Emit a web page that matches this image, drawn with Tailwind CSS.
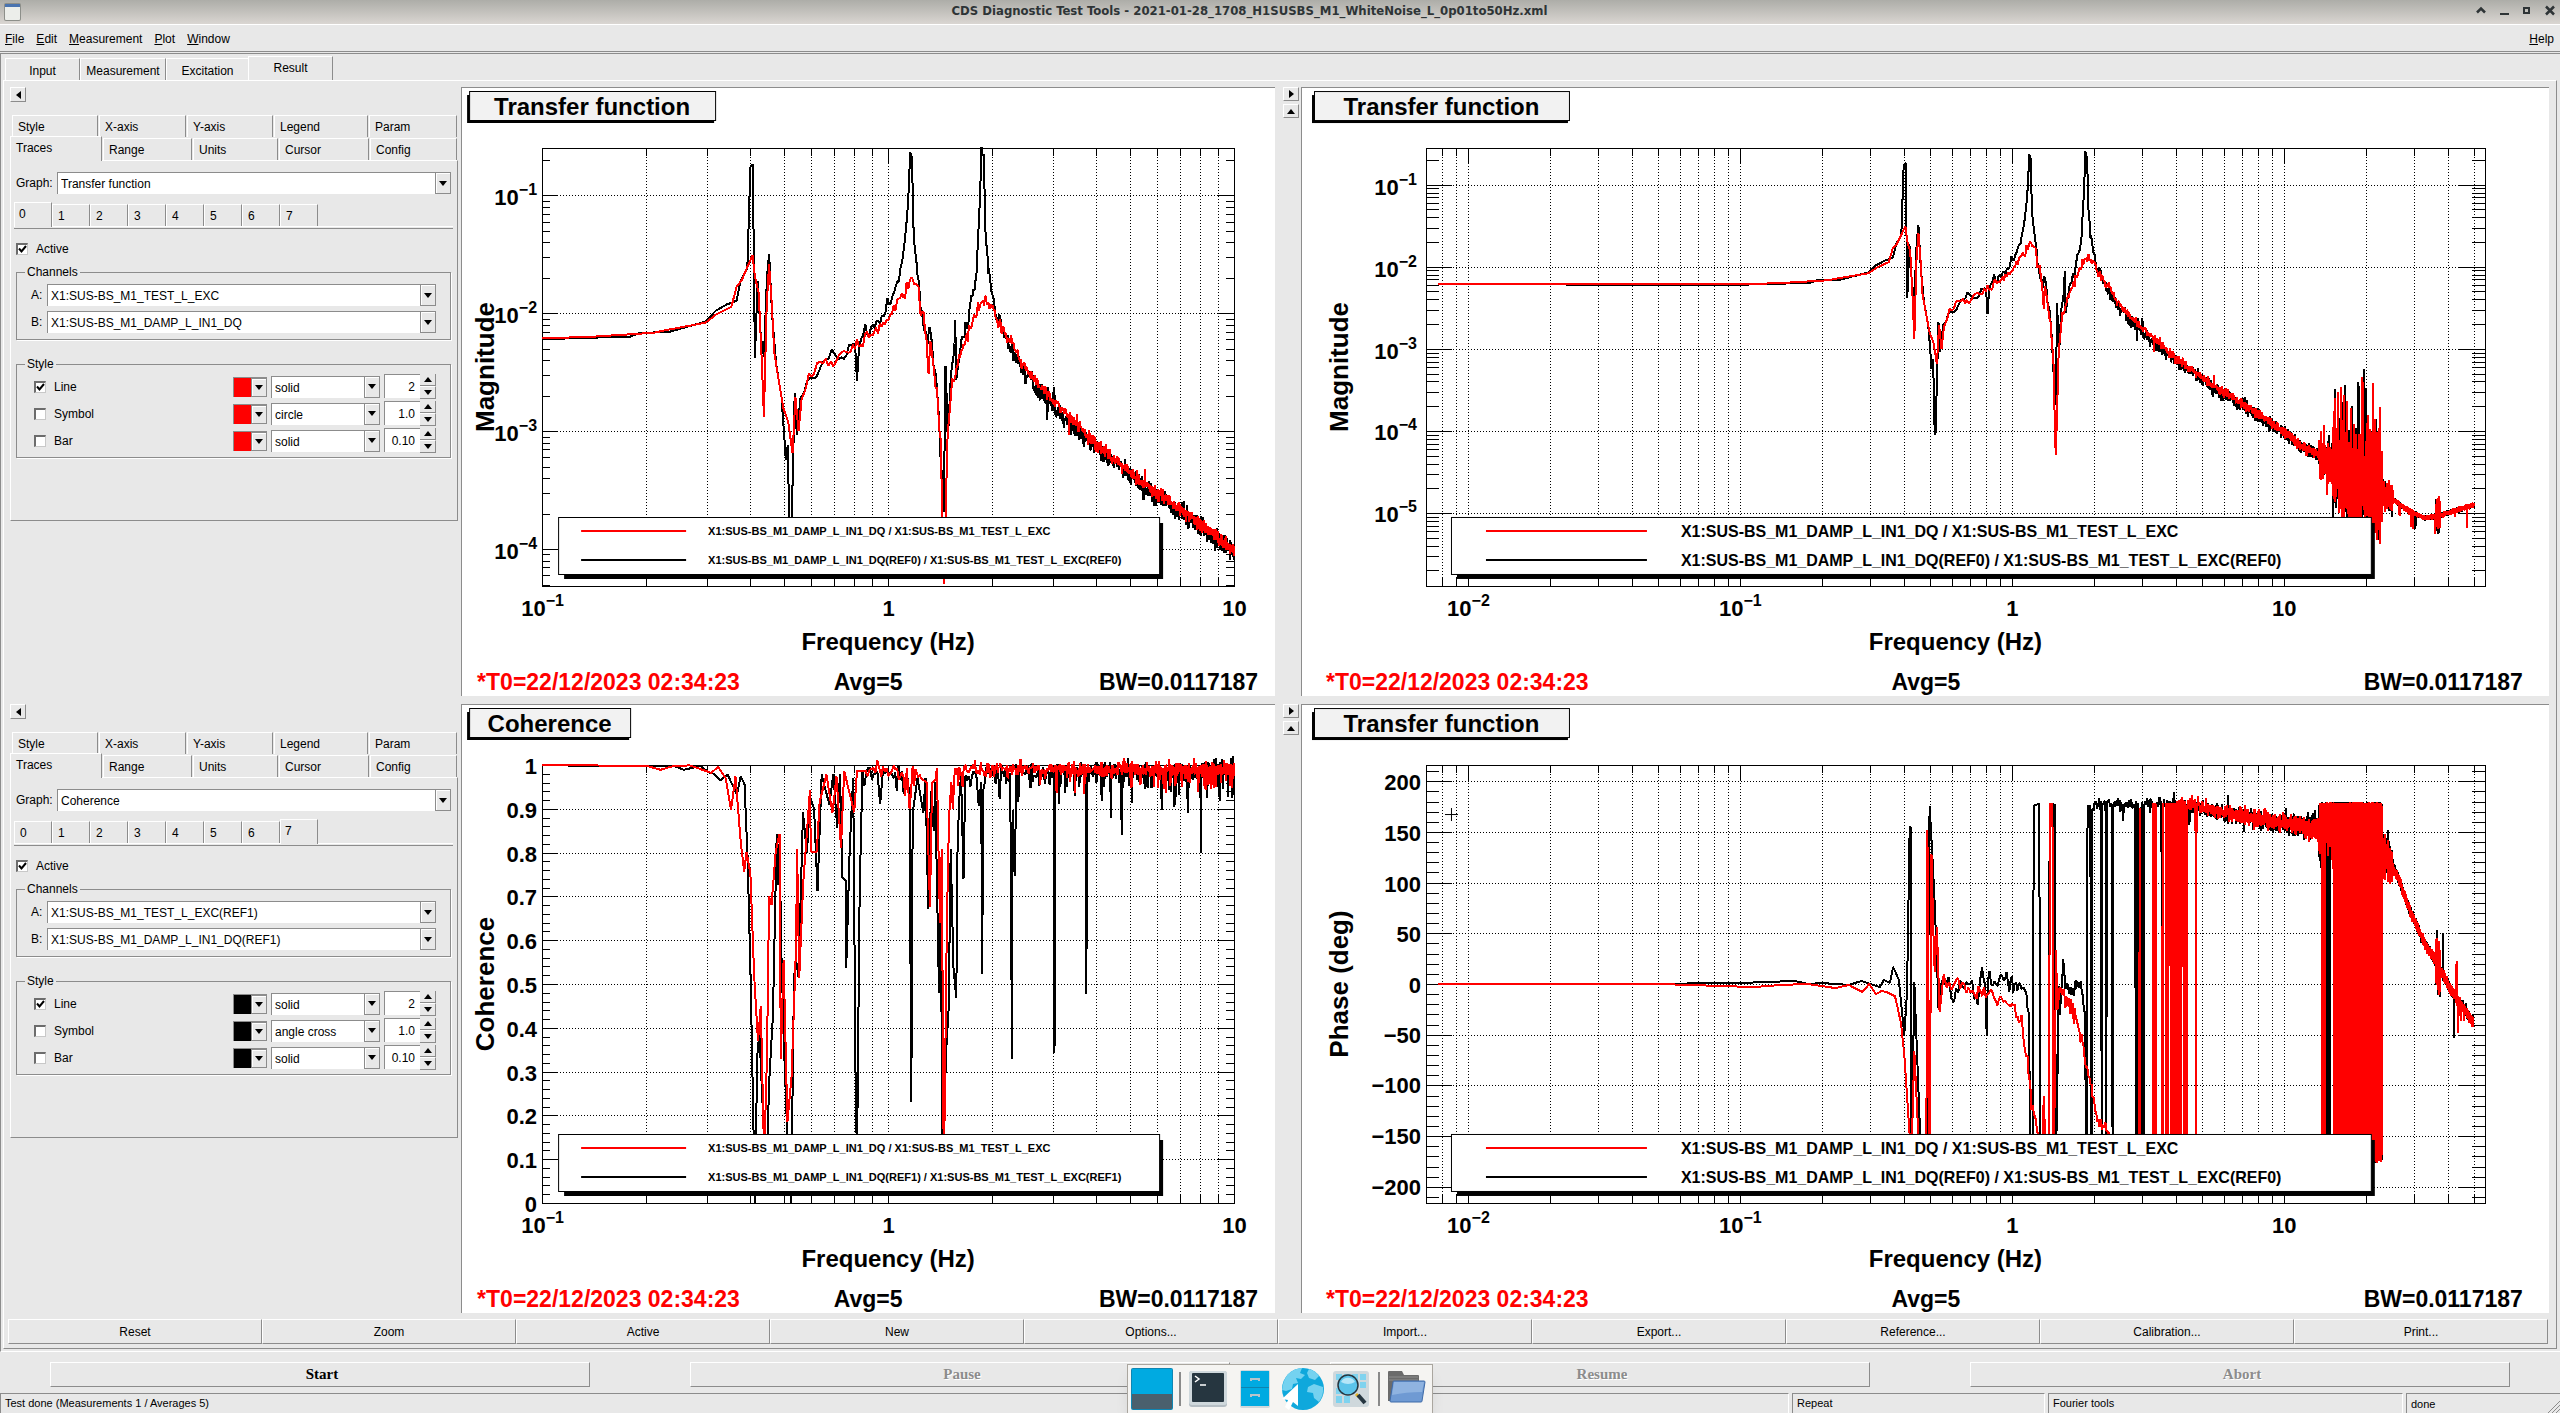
<!DOCTYPE html>
<html lang="en">
<head>
  <meta charset="UTF-8">
  <meta name="viewport" content="width=device-width, initial-scale=1.0">
  <title>CDS Diagnostic Test Tools</title>
  <script src="https://cdn.jsdelivr.net/npm/@tailwindcss/browser@4"></script>
</head>
<body class="h-screen flex flex-col overflow-hidden bg-[#e8e8e8] text-black text-xs font-['Liberation_Sans',Arial,sans-serif]">
  <!-- Title bar -->
  <header class="h-6 shrink-0 flex items-center justify-between px-1 bg-linear-to-b from-[#adada8] to-[#dad6d2] text-[#2e3436]">
    <svg class="w-5 h-5" viewBox="0 0 20 20"><rect x="0" y="1" width="17" height="18" rx="2" fill="#8d8f8a"/><rect x="1" y="2" width="15" height="16" rx="1" fill="#eceeea"/><rect x="1" y="2" width="15" height="3" fill="#4a74b0"/></svg>
    <h1 class="pb-[3px] text-[13px] font-bold font-['DejaVu_Sans_Condensed','DejaVu_Sans',sans-serif]">CDS Diagnostic Test Tools - 2021-01-28_1708_H1SUSBS_M1_WhiteNoise_L_0p01to50Hz.xml</h1>
    <div class="flex gap-[11px] pb-1">
      <button aria-label="Shade"><svg class="w-3 h-3" viewBox="0 0 12 12" fill="none" stroke="#2e3436" stroke-width="2.5"><path d="M2 8.500L6 4.500L10 8.500"/></svg></button>
      <button aria-label="Minimize"><svg class="w-3 h-3" viewBox="0 0 12 12"><rect x="2" y="9" width="9" height="2" fill="#2e3436"/></svg></button>
      <button aria-label="Maximize"><svg class="w-3 h-3" viewBox="0 0 12 12" fill="none" stroke="#2e3436" stroke-width="2"><rect x="3" y="4" width="5" height="5"/></svg></button>
      <button aria-label="Close"><svg class="w-3 h-3" viewBox="0 0 12 12" stroke="#2e3436" stroke-width="2.5"><path d="M2 2.500L10 10.500M10 2.500L2 10.500"/></svg></button>
    </div>
  </header>

  <!-- Menu bar -->
  <nav class="h-7 shrink-0 flex items-center gap-3 pt-[2px] pl-[5px] pr-[6px] border-t border-t-white border-b border-b-[#8c8c8c]">
    <a href="#"><u>F</u>ile</a>
    <a href="#"><u>E</u>dit</a>
    <a href="#"><u>M</u>easurement</a>
    <a href="#"><u>P</u>lot</a>
    <a href="#"><u>W</u>indow</a>
    <a href="#" class="ml-auto"><u>H</u>elp</a>
  </nav>

  <!-- Main area -->
  <main class="flex-1 min-h-0 mt-px flex flex-col pl-[2px] pr-[3px] pb-[2px] border-t border-l border-t-[#8c8c8c] border-l-[#8c8c8c] border-b border-b-white">
    <div class="h-[26px] shrink-0 flex items-end pl-[2px]">
      <button class="w-[75px] h-[22px] pt-[2px] border-t border-l border-white border-r border-r-[#8c8c8c]">Input</button>
      <button class="w-[86px] h-[22px] pt-[2px] border-t border-l border-white border-r border-r-[#8c8c8c]">Measurement</button>
      <button class="w-[82px] h-[22px] pt-[2px] border-t border-l border-white">Excitation</button>
      <button class="w-[85px] h-[25px] -mb-px pb-[2px] bg-[#e8e8e8] border-t border-l border-white border-r border-r-[#8c8c8c]">Result</button>
    </div>
    <div class="flex-1 min-h-0 flex flex-col pt-[6px] pb-1 border-t border-l border-white border-r border-r-[#8c8c8c] border-b border-b-[#8c8c8c]">
      <div id="pads" class="flex-1 min-h-0 grid grid-rows-2 gap-2"></div>
      <div class="h-[25px] shrink-0 mt-[6px] ml-1 mr-2 grid grid-cols-10">
        <button class="border-t border-l border-white border-r border-r-[#8c8c8c] border-b border-b-[#8c8c8c]">Reset</button>
        <button class="border-t border-l border-white border-r border-r-[#8c8c8c] border-b border-b-[#8c8c8c]">Zoom</button>
        <button class="border-t border-l border-white border-r border-r-[#8c8c8c] border-b border-b-[#8c8c8c]">Active</button>
        <button class="border-t border-l border-white border-r border-r-[#8c8c8c] border-b border-b-[#8c8c8c]">New</button>
        <button class="border-t border-l border-white border-r border-r-[#8c8c8c] border-b border-b-[#8c8c8c]">Options...</button>
        <button class="border-t border-l border-white border-r border-r-[#8c8c8c] border-b border-b-[#8c8c8c]">Import...</button>
        <button class="border-t border-l border-white border-r border-r-[#8c8c8c] border-b border-b-[#8c8c8c]">Export...</button>
        <button class="border-t border-l border-white border-r border-r-[#8c8c8c] border-b border-b-[#8c8c8c]">Reference...</button>
        <button class="border-t border-l border-white border-r border-r-[#8c8c8c] border-b border-b-[#8c8c8c]">Calibration...</button>
        <button class="border-t border-l border-white border-r border-r-[#8c8c8c] border-b border-b-[#8c8c8c]">Print...</button>
      </div>
    </div>
  </main>

  <!-- Run controls -->
  <div class="h-[41px] shrink-0 grid grid-cols-4 gap-[100px] px-[50px] pt-[10px] pb-[6px] text-[15px] font-bold font-['Liberation_Serif',serif]">
    <button class="pl-1 border-t border-l border-white border-r border-r-[#8c8c8c] border-b border-b-[#8c8c8c]">Start</button>
    <button disabled class="pl-1 border-t border-l border-white border-r border-r-[#8c8c8c] border-b border-b-[#8c8c8c] text-[#8c8c8c] text-shadow-[1px_1px_0_#fff]">Pause</button>
    <button disabled class="pl-1 border-t border-l border-white border-r border-r-[#8c8c8c] border-b border-b-[#8c8c8c] text-[#8c8c8c] text-shadow-[1px_1px_0_#fff]">Resume</button>
    <button disabled class="pl-1 border-t border-l border-white border-r border-r-[#8c8c8c] border-b border-b-[#8c8c8c] text-[#8c8c8c] text-shadow-[1px_1px_0_#fff]">Abort</button>
  </div>

  <!-- Status bar -->
  <footer class="h-5 shrink-0 grid grid-cols-[1789fr_253fr_355fr_154fr] gap-[3px] text-[11px] leading-[18px]">
    <div class="pl-1 border-t border-l border-[#8c8c8c] border-r border-r-white">Test done (Measurements 1 / Averages 5)</div>
    <div class="pl-1 border-t border-l border-[#8c8c8c] border-r border-r-white">Repeat</div>
    <div class="pl-1 border-t border-l border-[#8c8c8c] border-r border-r-white">Fourier tools</div>
    <div class="pl-1 border-t border-l border-[#8c8c8c] flex justify-between items-end"><span>done</span>
      <svg class="w-3 h-3" viewBox="0 0 12 12" stroke="#8c8c8c"><path d="M0 12L12 0M4 12L12 4M8 12L12 8"/></svg>
    </div>
  </footer>

  <!-- Dock -->
  <div class="fixed bottom-0 left-1/2 -translate-x-1/2 w-[306px] h-[49px] pl-[3px] pt-[3px] flex items-start bg-[#f5f4f2] border border-b-0 border-[#aaa69f] shadow-lg">
    <button aria-label="Show desktop" class="w-[42px]"><svg class="w-[42px] h-[42px]" viewBox="0 0 42 42"><rect width="42" height="42" rx="2" fill="#0f86b3"/><rect x="1" y="1" width="40" height="25" fill="#00aae1"/><path d="M1 26h40v14q0 1-1 1H2q-1 0-1-1z" fill="#4a606d"/></svg></button>
    <span class="w-[2px] h-[34px] mt-1 ml-[6px] bg-[#8a8a8a]"></span>
    <button aria-label="Terminal" class="ml-[7px]"><svg class="w-10 h-[42px]" viewBox="0 0 40 42"><rect x="1" y="3" width="38" height="36" rx="3" fill="#b5bec4"/><rect x="1" y="3" width="38" height="34" rx="3" fill="#cfd8dc"/><rect x="4" y="5" width="32" height="29" rx="1" fill="#263640"/><path d="M7 8l4 3-4 3" fill="none" stroke="#fff" stroke-width="1.500"/><path d="M12 17h6" stroke="#fff" stroke-width="1.500"/></svg></button>
    <button aria-label="File manager" class="ml-3"><svg class="w-[30px] h-[42px]" viewBox="0 0 30 42"><rect x="0" y="2" width="30" height="38" rx="2" fill="#cfd8dc"/><rect x="1" y="3" width="28" height="16" fill="#00aae1"/><rect x="1" y="20" width="28" height="18" fill="#00aae1"/><path d="M1 19.500h28" stroke="#0d84b0"/><path d="M11 13v-2h8v2M11 29v-2h8v2" fill="none" stroke="#b7c4cb" stroke-width="2"/></svg></button>
    <button aria-label="Web browser" class="ml-3"><svg class="w-[42px] h-[42px]" viewBox="0 0 42 42"><circle cx="21" cy="21" r="21" fill="#0fa8dc"/><path d="M6 6q7-6 14-6l-2 5 5 2-4 4-5-1 2 5-5 1-1 5-6 2-4-1q1-10 6-16zM27 1q7 2 10 7l-4 4-6-2-2-5zM26 19l6-3 9 3q1 8-4 15l-5-4-1-5-6-1z" fill="#74d2f0"/><path d="M16 16v22l-5-4-4 8-4-3 3-7-6-1z" fill="#fff"/></svg></button>
    <button aria-label="Search" class="ml-[9px]"><svg class="w-9 h-[42px]" viewBox="0 0 36 42"><rect x="0" y="3" width="36" height="36" rx="3" fill="#cfd8dc"/><path d="M3 6h6v6H3zM11 6h6v6h-6zM19 6h6v6h-6zM27 6h6v6h-6zM27 14h6v6h-6zM3 28h6v7H3zM11 28h6v7h-6zM3 20h6v6H3z" fill="#7fd3ef"/><path d="M23 26l3 3" stroke="#e6b422" stroke-width="3"/><path d="M25 27l7 8" stroke="#263640" stroke-width="4"/><circle cx="15" cy="17" r="10" fill="#5cc4ea" stroke="#263640" stroke-width="1.500"/><path d="M8 14a8 8 0 0 1 14 0q-7 4-14 0" fill="#b5e6f8"/></svg></button>
    <span class="w-[2px] h-[34px] mt-1 ml-[9px] bg-[#8a8a8a]"></span>
    <button aria-label="Folder" class="ml-[6px]"><svg class="w-10 h-[42px]" viewBox="0 0 40 42"><path d="M2 4q0-1 1-1h13l2 4h14q1 0 1 1v25H2z" fill="#6b6b6b"/><path d="M3 9h29M3 12h29" stroke="#8d8d8d"/><path d="M8 13h30q1 0 1 1l-3 19q0 1-1 1H5q-1 0-1-1l3-19q0-1 1-1z" fill="#6f9ad3" stroke="#3f6ba8"/><path d="M8 14h30l-2 10q-16 0-30 3z" fill="#8fb3e0"/></svg></button>
  </div>

  <script>
    // ---- Control panels -------------------------------------------------
    const down = '<svg class="w-2 h-[5px]" viewBox="0 0 8 5"><path d="M0 0h8L4 5z"/></svg>';
    const up = '<svg class="w-2 h-[5px]" viewBox="0 0 8 5"><path d="M0 5h8L4 0z"/></svg>';

    const combo = (id, label, value) => `
      <span class="relative flex-1 h-[22px] block">
        <select id="${id}" aria-label="${label}" class="appearance-none w-full h-full pl-[3px] pt-px bg-white border-t border-l border-[#8c8c8c]"><option>${value}</option></select>
        <span class="pointer-events-none absolute right-0 top-0 w-4 h-full flex items-center justify-center bg-[#e8e8e8] border border-[#8c8c8c] shadow-[inset_1px_1px_0_#fff]">${down}</span>
      </span>`;

    const tick = (id, label, on) => `
      <label class="flex items-center gap-2">
        <span class="relative block w-3 h-3">
          <input type="checkbox" id="${id}" ${on ? 'checked' : ''} class="peer appearance-none block w-3 h-3 bg-white border-t-2 border-l-2 border-[#6c6c6c] border-r border-r-[#c8c8c8] border-b border-b-[#c8c8c8]">
          <svg class="hidden peer-checked:block pointer-events-none absolute left-0 top-0 w-3 h-3" viewBox="0 0 12 12" fill="none" stroke="#000" stroke-width="2"><path d="M3 5.500l2.500 3L10 3"/></svg>
        </span>${label}
      </label>`;

    const styleRow = (p, name, on, color, kind, num) => `
      <div class="h-[25px] flex items-center pl-[17px] pr-[14px]">
        <div class="flex-1">${tick(`${p}-${name}`, name, on)}</div>
        <button aria-label="${name} color" class="w-[34px] h-5 flex border-t border-l border-[#8c8c8c]">
          <span class="flex-1 h-full ${color}"></span>
          <span class="w-4 h-full flex items-center justify-center border border-[#8c8c8c] shadow-[inset_1px_1px_0_#fff]">${down}</span>
        </button>
        <span class="w-[109px] ml-1 flex">${combo(`${p}-${name}-kind`, `${name} style`, kind)}</span>
        <span class="w-[52px] h-[25px] ml-1 flex">
          <input aria-label="${name} size" value="${num}" class="w-9 h-[24px] pr-[5px] text-right bg-white border-t border-l border-[#8c8c8c]">
          <span class="flex-1 flex flex-col">
            <button aria-label="Increase" class="flex-1 flex items-center justify-center border-r border-b border-[#8c8c8c]">${up}</button>
            <button aria-label="Decrease" class="flex-1 flex items-center justify-center border-t border-t-white border-r border-b border-[#8c8c8c]">${down}</button>
          </span>
        </span>
      </div>`;

    const tab = (w, name) => `<button class="${w} h-[22px] pl-[5px] pt-px text-left border-t border-l border-white border-r border-r-[#8c8c8c]">${name}</button>`;

    const numTab = (n, sel) => n === sel
      ? `<button class="w-[38px] h-[25px] -mb-px pl-1 pb-[2px] text-left bg-[#e8e8e8] border-t border-l border-white border-r border-r-[#8c8c8c]">${n}</button>`
      : `<button class="w-[38px] h-[22px] pl-[5px] pt-px text-left border-t border-l border-white border-r border-r-[#8c8c8c]">${n}</button>`;

    const panel = (p, o) => `
      <div class="w-[457px] shrink-0 pl-[6px] pr-[3px]">
        <button aria-label="Collapse" class="w-4 h-[15px] flex items-center justify-center border-t border-l border-white border-r border-r-[#8c8c8c] border-b border-b-[#8c8c8c]"><svg class="w-[5px] h-2" viewBox="0 0 5 8"><path d="M5 0v8L0 4z"/></svg></button>
        <div class="flex gap-px mt-[13px] pl-[2px] pr-px">
          ${tab('w-[86px]', 'Style')}${tab('w-[87px]', 'X-axis')}${tab('w-[86px]', 'Y-axis')}${tab('w-[94px]', 'Legend')}${tab('flex-1', 'Param')}
        </div>
        <div class="flex items-end gap-px h-[23px] pr-px">
          <button class="w-[92px] h-[25px] -mb-px pl-[5px] pb-[2px] text-left bg-[#e8e8e8] border-t border-l border-white border-r border-r-[#8c8c8c]">Traces</button>
          ${tab('w-[89px]', 'Range')}${tab('w-[85px]', 'Units')}${tab('w-[90px]', 'Cursor')}${tab('flex-1', 'Config')}
        </div>
        <div class="h-[361px] pl-[5px] pr-[6px] pt-[11px] border-t border-l border-white border-r border-r-[#8c8c8c] border-b border-b-[#8c8c8c]">
          <div class="flex items-center gap-[6px]"><label for="${p}-graph" class="w-[35px]">Graph:</label>${combo(`${p}-graph`, 'Graph', o.graph)}</div>
          <div class="-mx-[2px] flex items-end h-[33px] border-b border-white">${[0, 1, 2, 3, 4, 5, 6, 7].map(n => numTab(n, o.trace)).join('')}</div>
          <div class="-mx-[2px] mt-px border-t border-[#8c8c8c]"></div>
          <div class="h-[34px] flex items-center pt-[5px]">${tick(`${p}-active`, 'Active', true)}</div>
          <fieldset class="mt-px h-[76px] border border-[#8c8c8c] shadow-[1px_1px_0_#fff]">
            <legend class="ml-[8px] px-[2px] leading-4">Channels</legend>
            <div class="flex flex-col gap-[5px] pl-[14px] pr-[14px] pt-1">
              <div class="flex items-center gap-1"><label for="${p}-a" class="w-3">A:</label>${combo(`${p}-a`, 'A', o.a)}</div>
              <div class="flex items-center gap-1"><label for="${p}-b" class="w-3">B:</label>${combo(`${p}-b`, 'B', o.b)}</div>
            </div>
          </fieldset>
          <fieldset class="mt-4 h-[102px] border border-[#8c8c8c] shadow-[1px_1px_0_#fff]">
            <legend class="ml-[8px] px-[2px] leading-4">Style</legend>
            <div class="flex flex-col gap-[2px] pt-[2px]">
              ${styleRow(p, 'Line', true, o.color, 'solid', '2')}
              ${styleRow(p, 'Symbol', false, o.color, o.symbol, '1.0')}
              ${styleRow(p, 'Bar', false, o.color, 'solid', '0.10')}
            </div>
          </fieldset>
        </div>
      </div>`;

    const padRow = (p, o) => `
      <section class="min-h-0 flex pr-[7px]">
        ${panel(p, o)}
        <div class="flex-[814] min-w-0 bg-white border-t border-l border-[#8c8c8c]"><svg id="${p}-left" class="block w-full h-full" viewBox="0 0 813 608"></svg></div>
        <div class="w-[26px] shrink-0 pl-2 flex flex-col gap-[3px]">
          <button aria-label="Expand right" class="w-4 h-[14px] flex items-center justify-center border-t border-l border-white border-r border-r-[#8c8c8c] border-b border-b-[#8c8c8c]"><svg class="w-[5px] h-2" viewBox="0 0 5 8"><path d="M0 0v8l5-4z"/></svg></button>
          <button aria-label="Expand up" class="w-4 h-[14px] flex items-center justify-center border-t border-l border-white border-r border-r-[#8c8c8c] border-b border-b-[#8c8c8c]">${up}</button>
        </div>
        <div class="flex-[1248] min-w-0 bg-white border-t border-l border-[#8c8c8c]"><svg id="${p}-right" class="block w-full h-full" viewBox="0 0 1247 608"></svg></div>
      </section>`;

    document.getElementById('pads').innerHTML =
      padRow('top', { graph: 'Transfer function', trace: 0, a: 'X1:SUS-BS_M1_TEST_L_EXC', b: 'X1:SUS-BS_M1_DAMP_L_IN1_DQ', color: 'bg-[#ff0000]', symbol: 'circle' }) +
      padRow('bottom', { graph: 'Coherence', trace: 7, a: 'X1:SUS-BS_M1_TEST_L_EXC(REF1)', b: 'X1:SUS-BS_M1_DAMP_L_IN1_DQ(REF1)', color: 'bg-black', symbol: 'angle cross' });

    // ---- Traces: [log10(f), value] --------------------------------------
    // transfer function magnitudes are log10 as well
    const tfRed = [[-2.11,-2.213],[-1,-2.213],[-.861,-2.2],[-.68,-2.166],[-.634,-2.138],[-.528,-2.08],[-.498,-2.012],[-.453,-1.944],[-.438,-1.774],[-.423,-1.72],[-.406,-1.603],[-.392,-1.508],[-.385,-1.688],[-.374,-1.825],[-.365,-2.404],[-.359,-2.875],[-.351,-1.927],[-.344,-1.586],[-.336,-1.927],[-.329,-2.336],[-.314,-2.609],[-.302,-2.813],[-.289,-2.916],[-.276,-3.188],[-.268,-2.711],[-.259,-3],[-.25,-2.711],[-.238,-2.643],[-.229,-2.506],[-.214,-2.506],[-.196,-2.421],[-.158,-2.404],[-.12,-2.336],[-.09,-2.251],[-.045,-2.166],[-.014,-2.08],[.001,-2.029],[.031,-1.876],[.049,-1.808],[.067,-1.682],[.088,-1.774],[.094,-1.961],[.107,-2.132],[.117,-2.472],[.122,-2.2],[.131,-2.438],[.141,-2.677],[.152,-3.086],[.161,-4.32],[.172,-3.018],[.185,-2.609],[.205,-2.404],[.224,-2.234],[.243,-2.063],[.265,-1.927],[.28,-1.876],[.303,-1.944],[.333,-2.149],[.394,-2.455],[.477,-2.745],[.601,-3.103],[.726,-3.41],[.847,-3.665],[1,-4.006],[1.063,-4.183],[1.131,-4.293],[1.161,-4.376],[1.236,-4.6],[1.311,-4.62],[1.386,-4.8],[1.461,-4.98],[1.521,-5.065],[1.596,-5.01],[1.698,-4.9]];
    const tfBlack = [[-2.11,-2.213],[-1.64,-2.216],[-1.63,-2.226],[-1.2,-2.226],[-1,-2.22],[-.816,-2.203],[-.748,-2.2],[-.717,-2.166],[-.634,-2.159],[-.528,-2.07],[-.498,-1.978],[-.468,-1.927],[-.438,-1.893],[-.426,-1.723],[-.407,-1.62],[-.401,-1.041],[-.398,-.761],[-.391,-.734],[-.385,-2.377],[-.377,-1.723],[-.368,-2.2],[-.359,-2.37],[-.35,-1.688],[-.344,-1.498],[-.335,-2.029],[-.323,-2.438],[-.308,-2.711],[-.299,-3.086],[-.296,-3.24],[-.29,-3.12],[-.284,-4.04],[-.281,-4.04],[-.27,-2.677],[-.264,-3.035],[-.253,-2.711],[-.234,-2.592],[-.214,-2.56],[-.181,-2.421],[-.163,-2.319],[-.135,-2.387],[-.105,-2.285],[-.095,-2.268],[-.09,-2.602],[-.084,-2.234],[-.06,-2.149],[-.029,-2.08],[.008,-1.91],[.031,-1.723],[.046,-1.45],[.058,-1.041],[.064,-.7],[.069,-.7],[.073,-1.245],[.085,-1.654],[.098,-2.029],[.114,-2.2],[.119,-2.097],[.131,-2.421],[.144,-2.745],[.158,-3.6],[.161,-3.7],[.166,-2.414],[.172,-3.045],[.182,-2.506],[.192,-2.3],[.194,-2.063],[.197,-2.54],[.212,-2.268],[.235,-1.995],[.255,-1.654],[.264,-1.143],[.27,-.6],[.276,-.7],[.282,-1.382],[.294,-1.723],[.309,-1.961],[.348,-2.268],[.401,-2.523],[.475,-2.78],[.479,-2.65],[.483,-2.83],[.601,-3.137],[.726,-3.444],[.847,-3.69],[1,-4.02],[1.063,-4.19],[1.131,-4.3],[1.161,-4.38],[1.236,-4.5],[1.311,-4.6],[1.386,-4.8],[1.461,-4.98],[1.521,-5.065],[1.596,-5.01],[1.698,-4.9]];
    const cohBlack = [[-1,1],[-.805,.997],[-.619,.998],[-.591,.989],[-.542,.998],[-.519,.983],[-.503,.98],[-.485,.965],[-.464,.978],[-.437,.933],[-.426,.974],[-.415,.956],[-.406,.79],[-.398,.535],[-.393,.337],[-.385,0],[-.378,.337],[-.372,.39],[-.359,.156],[-.351,.07],[-.344,.274],[-.333,.427],[-.322,.843],[-.319,.725],[-.314,.82],[-.308,.56],[-.3,.337],[-.291,.15],[-.28,0],[-.272,.517],[-.266,.554],[-.259,.517],[-.246,.892],[-.235,.8],[-.224,.924],[-.214,.9],[-.204,.712],[-.192,.978],[-.17,.91],[-.158,.98],[-.147,.856],[-.139,.98],[-.132,.743],[-.122,.735],[-.121,.536],[-.111,.807],[-.101,.97],[-.094,.274],[-.09,.1],[-.082,.716],[-.074,.987],[-.031,.985],[-.023,.91],[-.015,.985],[.062,.98],[.067,.23],[.071,.89],[.085,.97],[.102,.89],[.108,.97],[.116,.671],[.124,.94],[.132,.85],[.136,.96],[.147,.48],[.152,.72],[.158,.02],[.167,.337],[.175,.445],[.181,.807],[.189,.536],[.197,.468],[.201,.825],[.207,.94],[.211,.98],[.218,.74],[.223,.97],[.255,.98],[.262,.906],[.269,.96],[.272,.522],[.275,.94],[.283,.985],[.353,.98],[.356,.59],[.358,.328],[.36,.897],[.367,.746],[.37,.985],[.479,.98],[.481,.343],[.483,.985],[.571,.985],[.573,.477],[.575,.985],[.642,.985],[.644,.88],[.646,.985],[.673,.985],[.675,.84],[.677,.985],[.864,.985],[.866,.89],[.868,.985],[.903,.985],[.904,.8],[.905,.99],[1,.99]];
    const cohRed = [[-1,1],[-.697,.998],[-.658,.989],[-.619,.998],[-.573,.999],[-.511,.982],[-.491,.996],[-.469,.969],[-.454,.897],[-.441,.974],[-.426,.825],[-.416,.757],[-.409,.802],[-.398,.752],[-.387,.518],[-.376,.369],[-.368,.45],[-.358,.1],[-.35,.337],[-.344,.7],[-.337,.68],[-.325,.802],[-.314,.843],[-.31,.33],[-.302,.554],[-.291,.185],[-.279,.29],[-.266,.59],[-.263,.807],[-.257,.513],[-.245,.734],[-.226,.942],[-.223,.802],[-.206,.802],[-.198,.915],[-.178,.978],[-.161,.89],[-.149,.974],[-.136,.811],[-.127,.987],[-.098,.892],[-.09,.987],[.054,.99],[.062,.9],[.071,.985],[.111,.96],[.121,.676],[.127,.96],[.141,.97],[.15,.64],[.155,.807],[.161,.06],[.17,.644],[.176,.88],[.183,.96],[.187,.9],[.193,.99],[1,.99]];
    const phBlack = [[-2.11,0],[-1.4,0],[-1,1],[-.8,3],[-.75,0],[-.7,1],[-.6,-1],[-.554,3],[-.486,-3],[-.471,4],[-.449,1],[-.437,17],[-.416,4],[-.396,-50],[-.386,-8],[-.376,155],[-.373,155],[-.369,-180],[-.359,2],[-.336,-160],[-.33,-178],[-.314,-178],[-.303,176],[-.293,128],[-.284,79],[-.275,16],[-.27,-24],[-.258,3],[-.243,2],[-.213,-2],[-.176,-4],[-.161,5],[-.126,-15],[-.116,8],[-.098,2],[-.093,-53],[-.089,5],[-.03,4],[.005,-2],[.053,-3],[.062,-33],[.069,-176],[.072,175],[.1,178],[.105,-178],[.128,-178],[.131,178],[.158,178],[.161,-175],[.167,-102],[.171,0],[.177,-28],[.188,20],[.197,-5],[.257,-2],[.267,-29],[.275,-170],[.278,176],[.328,177],[.33,-178],[.332,177],[.346,177],[.347,-178],[.349,177],[.368,177],[.37,-178],[.372,177],[.45,177],[.6,177],[1,158],[1.13,153],[1.2,172],[1.356,176],[1.365,120],[1.378,133],[1.42,105],[1.461,74],[1.51,45],[1.566,18],[1.626,-11],[1.694,-37]];
    const phRed = [[-2.11,0],[-1.3,0],[-.95,-3],[-.85,-1],[-.75,0],[-.65,-4],[-.6,-1],[-.55,-8],[-.525,0],[-.5,-10],[-.48,-7],[-.46,-8],[-.43,-12],[-.408,-39],[-.396,-70],[-.377,-145],[-.37,-178],[-.359,-66],[-.344,-150],[-.336,-178],[-.315,-178],[-.311,152],[-.303,-178],[-.296,128],[-.29,60],[-.284,12],[-.276,56],[-.266,-28],[-.251,10],[-.24,-6],[-.206,5],[-.168,-9],[-.116,-8],[-.048,-13],[.005,-24],[.035,-42],[.057,-73],[.072,-114],[.095,-143],[.112,-165],[.117,-109],[.125,-175],[.137,-177],[.139,176],[.149,177],[.151,-175],[.158,-110],[.162,30],[.167,-29],[.177,0],[.2,-13],[.23,-30],[.26,-60],[.29,-100],[.312,-132],[.35,-145],[.38,-165],[.41,-177],[.468,-177],[.47,178],[.472,-177],[.6,-177],[.602,177],[.675,177],[.677,-177],[.679,177],[.75,170],[1,160],[1.13,151],[1.2,168],[1.356,172],[1.365,125],[1.378,123],[1.42,105],[1.461,74],[1.51,45],[1.566,18],[1.626,-11],[1.694,-37]];

    let seed = 7;
    const rnd = () => (seed = (seed * 16807) % 2147483647) / 2147483647;
    const gauss = () => rnd() + rnd() + rnd() + rnd() - 2;

    // resample on the 0.0117 Hz analysis grid and let fn roughen every bin
    function sample(pts, fn) {
      const out = [];
      for (let i = 0; i < pts.length - 1; i++) {
        const [a, va] = pts[i], [b, vb] = pts[i + 1];
        const n = Math.max(1, Math.round((10 ** b - 10 ** a) / 0.0117));
        for (let k = 0; k < n; k++) {
          const t = k / n;
          const lf = Math.log10(10 ** a + (10 ** b - 10 ** a) * t);
          const v = va + (vb - va) * (lf - a) / (b - a);
          out.push([lf, fn(lf, v, k)]);
        }
      }
      out.push(pts[pts.length - 1]);
      return out;
    }

    const tfNoise = s => (lf, v) => {
      if (lf < -.25) return v;
      if (lf < .3) return v + gauss() * .05;
      if (lf < 1.13) return v + gauss() * s + (lf < .8 && rnd() < .03 ? gauss() * .15 : 0);
      if (lf < 1.18) return v + gauss() * .22 + (rnd() < .04 ? rnd() * .5 : 0);
      if (lf < 1.36) return v + gauss() * .45 + (rnd() < .03 ? .3 + rnd() * .9 : 0);
      if (lf < 1.4) return v + gauss() * .14;
      if (Math.abs(lf - 1.567) < .008) return v + gauss() * .16;
      return v + gauss() * .025 + (rnd() < .003 ? -.25 * rnd() : 0);
    };
    const cohNoise = (s, dips) => (lf, v) => {
      if (lf < -.07 || v < .97) return v;
      return Math.min(1.02, v + gauss() * s * .8 - (rnd() < dips ? rnd() * s * 3 : 0) + (rnd() < .015 ? .018 : 0));
    };
    const phNoise = flips => (lf, v) => {
      if (lf < -.25) return v;
      if (flips.some(([a, b, p]) => lf > a && lf < b && rnd() < p)) return -178 + rnd() * (lf > 1 ? 22 : 1);
      if (Math.abs(v) > 170 && lf < .28) return v;
      if (lf < .28) return v + gauss() * 9;
      if (lf < .45 && v < 0) return v + gauss() * 5;
      if (lf < 1.13) return v < 0 ? v : v + gauss() * (5 + 6 * Math.max(0, lf - .5)) + (rnd() < .02 ? gauss() * 12 : 0);
      if (lf < 1.36) return Math.min(179, v + gauss() * 34);
      if (lf < 1.4) return v + gauss() * 16;
      if (Math.abs(lf - 1.567) < .008) return v + gauss() * 22;
      return v + gauss() * 4 + (rnd() < .003 ? gauss() * 35 : 0);
    };

    const tf = [sample(tfBlack, tfNoise(.07)), sample(tfRed, tfNoise(.05))];
    const coh = [sample(cohBlack, cohNoise(.022, .12)), sample(cohRed, cohNoise(.018, .07))];
    const ph = [
      sample(phBlack, phNoise([[.072, .086, .5], [.129, .136, .5], [.15, .158, .5], [.278, .3, .5], [.455, .485, .5], [.55, .56, .3], [1.15, 1.17, .3], [1.19, 1.36, .3]])),
      sample(phRed, phNoise([[1.14, 1.152, .3], [1.183, 1.36, .4]]))
    ];
    // upward flips of the damped phase while it sits at the -180 wrap
    ph[1] = ph[1].map(([lf, v]) => {
      const hit = [[.137, .151, .6], [.518, .533, .5], [.554, .558, .9], [.566, .6, .6]].some(([a, b, p]) => lf > a && lf < b && rnd() < p);
      const back = [[.6, .624, .5], [.632, .648, .5]].some(([a, b, p]) => lf > a && lf < b && rnd() < p);
      return [lf, hit ? 178 : back ? -178 : v];
    });

    // ---- Plot drawing ---------------------------------------------------
    const line = (x1, y1, x2, y2) => `<path d="M${x1} ${y1}L${x2} ${y2}"/>`;
    const sup = (e, small) => e === 0 ? '1' : e === 1 ? '10' : `10<tspan dy="-10" font-size="${small}">−${-e}</tspan>`;

    function draw(id, o) {
      const y0 = 60, y1 = 498, { x0, x1 } = o;
      const X = lf => x0 + (lf - o.f0) / (o.f1 - o.f0) * (x1 - x0);
      const Y = v => y1 - (v - o.v0) / (o.v1 - o.v0) * (y1 - y0);
      let grid = '', ticks = '', labels = '';
      for (let d = -3; d <= 1; d++) {
        for (let m = 1; m < 10; m++) {
          const lf = d + Math.log10(m);
          if (lf < o.f0 - .001 || lf > o.f1 + .001) continue;
          const x = Math.round(X(lf)) + .5, len = m === 1 ? 15 : 8;
          grid += line(x, y0, x, y1);
          ticks += line(x, y0, x, y0 + len) + line(x, y1, x, y1 - len);
          if (m === 1) labels += `<text x="${x}" y="528" text-anchor="middle">${sup(d, 16)}</text>`;
        }
      }
      const major = o.wide ? 26 : 16;
      const yTick = (v, len) => {
        const y = Math.round(Y(v)) + .5;
        ticks += line(x0, y, x0 + len, y) + line(x1, y, x1 - len, y);
        return y;
      };
      if (o.logY) {
        for (let d = -6; d < 0; d++) {
          for (let m = 1; m < 10; m++) {
            const v = d + Math.log10(m);
            if (v < o.v0 || v > o.v1) continue;
            const y = yTick(v, m === 1 ? major : major / 2);
            if (m === 1) {
              grid += line(x0, y, x1, y);
              labels += `<text x="${x0 - (o.wide ? 9 : 5)}" y="${y + 9}" text-anchor="end">${sup(d, 16)}</text>`;
            }
          }
        }
      } else {
        const n0 = Math.ceil(o.v0 / o.step * 5 - .01), n1 = Math.floor(o.v1 / o.step * 5 + .01);
        for (let n = n0; n <= n1; n++) {
          const y = yTick(n * o.step / 5, n % 5 ? major / 2 : major);
          if (n % 5) continue;
          const v = Math.round(n / 5 * o.step * 10) / 10;
          grid += line(x0, y, x1, y);
          labels += `<text x="${x0 - 5}" y="${y + 8}" text-anchor="end">${String(v).replace('-', '−')}</text>`;
        }
      }
      const trace = (pts, color) => `<path fill="none" stroke="${color}" stroke-width="2" shape-rendering="crispEdges" stroke-linejoin="bevel" d="M${pts.map(([lf, v]) => X(lf).toFixed(1) + ' ' + Y(v).toFixed(1)).join('L')}"/>`;
      const L = o.wide ? { x: 149, x2: 1069, l1: 184, l2: 345, t: 379, size: 16, b: [449, 478] } : { x: 96, x2: 697, l1: 119, l2: 224, t: 246, size: 11, b: [447, 476] };
      const tx = o.wide ? 12 : 7;
      document.getElementById(id).innerHTML = `
        <defs><clipPath id="${id}-clip"><rect x="${x0}" y="${y0 - 20}" width="${x1 - x0 + 1}" height="${y1 - y0 + 21}"/></clipPath></defs>
        <g font-family="Liberation Sans, Arial, sans-serif" font-weight="bold" font-size="23">
          <rect x="${tx - 2}" y="7" width="${o.titleW + 1}" height="28"/>
          <rect x="${tx + .5}" y="3.500" width="${o.titleW}" height="29" fill="#f2f2f2" stroke="#000"/>
          <text x="${tx + o.titleW / 2}" y="27" text-anchor="middle" font-size="24">${o.title}</text>
          <g stroke="#000" shape-rendering="crispEdges" stroke-dasharray="1 2">${grid}</g>
          <g stroke="#000" shape-rendering="crispEdges">${ticks}</g>
          <rect x="${x0 + .5}" y="${y0 + .5}" width="${x1 - x0}" height="${y1 - y0}" fill="none" stroke="#000" shape-rendering="crispEdges"/>
          <g clip-path="url(#${id}-clip)">${trace(o.data[0], '#000')}${trace(o.data[1], '#f00')}</g>
          <g font-size="22">${labels}</g>
          <rect x="${L.x + 6}" y="435" width="${L.x2 - L.x - 2}" height="56"/>
          <rect x="${L.x + .5}" y="429.500" width="${L.x2 - L.x}" height="57" fill="#fff" stroke="#000"/>
          <path d="M${L.l1} 443H${L.l2}" stroke="#f00" stroke-width="2"/>
          <path d="M${L.l1} 472H${L.l2}" stroke="#000" stroke-width="2"/>
          <text x="${L.t}" y="${L.b[0]}" font-size="${L.size}">X1:SUS-BS_M1_DAMP_L_IN1_DQ / X1:SUS-BS_M1_TEST_L_EXC</text>
          <text x="${L.t}" y="${L.b[1]}" font-size="${L.size}">X1:SUS-BS_M1_DAMP_L_IN1_DQ(${o.ref}) / X1:SUS-BS_M1_TEST_L_EXC(${o.ref})</text>
          <text x="${(x0 + x1) / 2}" y="562" text-anchor="middle" font-size="24">Frequency (Hz)</text>
          <text transform="translate(${o.wide ? 46 : 32} 279) rotate(-90)" text-anchor="middle" font-size="26">${o.yTitle}</text>
          <text x="${o.wide ? 24 : 15}" y="602" fill="#f00">*T0=22/12/2023 02:34:23</text>
          <text x="${o.wide ? 624 : 406}" y="602" text-anchor="middle">Avg=5</text>
          <text x="${o.wide ? 1221 : 796}" y="602" text-anchor="end">BW=0.0117187</text>
          ${o.cursor ? '<path d="M143 109.500h13M149.500 103v13" stroke="#000"/>' : ''}
        </g>`;
    }

    const narrow = { wide: false, x0: 80, x1: 772, f0: -1, f1: 1 };
    const wide = { wide: true, x0: 124, x1: 1183, f0: -2.155, f1: 1.739, titleW: 255, title: 'Transfer function', ref: 'REF0' };
    draw('top-left', { ...narrow, v0: -4.313, v1: -.598, logY: true, title: 'Transfer function', titleW: 246, yTitle: 'Magnitude', ref: 'REF0', data: tf });
    draw('top-right', { ...wide, v0: -5.889, v1: -.554, logY: true, yTitle: 'Magnitude', data: tf });
    draw('bottom-left', { ...narrow, v0: 0, v1: 1, step: .1, title: 'Coherence', titleW: 161, yTitle: 'Coherence', ref: 'REF1', data: coh });
    draw('bottom-right', { ...wide, v0: -216, v1: 216, step: 50, yTitle: 'Phase (deg)', data: ph, cursor: true });
  </script>
</body>
</html>
